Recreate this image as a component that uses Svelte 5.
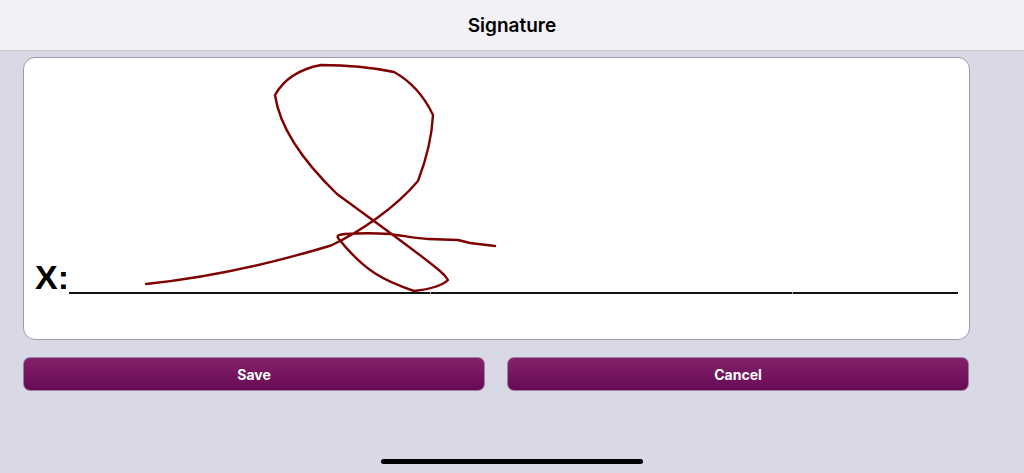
<script lang="ts">
  // signature stroke, in page pixels
  const stroke = `M146 284 C190 279.5 250 270 331 245.5 C360 232 395 208 418 181
    C426 160 432 135 433 115 C424 96 412 82 394 72 C370 67 345 65 321 65
    C300 69 284 79 275 95 C280 130 305 163 337 194 C360 211 415 250 440 271
    Q445 275 448 280 Q440 288 414 291 C385 281 365 272 338 238 Q336 234.5 345 234
    C360 233 375 233 390 234 C405 236 418 238.5 428 239 L458 240 L470 243 L495 246`;
</script>

<div class="screen">
  <header class="nav">Signature</header>

  <main class="content">
    <section class="pad">
      <div class="sign-row">
        <span class="x">X:</span>
        <span class="rule">
          <i></i>
          <i></i>
          <i class="last"></i>
        </span>
      </div>
      <svg class="ink" viewBox="24 58 945 281" aria-hidden="true">
        <path d={stroke} />
      </svg>
    </section>

    <div class="actions">
      <button>Save</button>
      <button>Cancel</button>
    </div>
  </main>

  <div class="home-bar"></div>
</div>

<style>
  :global(body) {
    margin: 0;
  }

  .screen {
    width: 1024px;
    height: 473px;
    display: flex;
    flex-direction: column;
    overflow: hidden;
    background: #d9d9e5;
    font-family: Inter, "Liberation Sans", sans-serif;
  }

  .nav {
    height: 50px;
    flex: none;
    display: flex;
    align-items: center;
    justify-content: center;
    background: #f1f1f6;
    border-bottom: 1px solid #cfcfda;
    color: #000;
    font-size: 19px;
    font-weight: 600;
  }

  .content {
    flex: 1;
    padding: 6px 54px 0 23px;
  }

  .pad {
    position: relative;
    box-sizing: border-box;
    height: 283px;
    padding: 0 11px 45px;
    display: flex;
    flex-direction: column;
    justify-content: flex-end;
    background: #fff;
    border: 1px solid #a596ae;
    border-radius: 12px;
  }

  .sign-row {
    display: flex;
    align-items: flex-end;
  }

  .x {
    font-family: "Liberation Sans", sans-serif;
    font-size: 34px;
    font-weight: 700;
    line-height: 34px;
    color: #000;
  }

  .rule {
    flex: 1;
    height: 2px;
    display: flex;
    gap: 1px;
    background: #999;
  }

  .rule i {
    width: 361px;
    background: #111;
  }

  .rule i.last {
    width: auto;
    flex: 1;
  }

  .ink {
    position: absolute;
    inset: 0;
    width: 100%;
    height: 100%;
  }

  .ink path {
    fill: none;
    stroke: #7f0000;
    stroke-width: 2.4;
    stroke-linejoin: round;
    stroke-linecap: round;
  }

  .actions {
    display: flex;
    gap: 22px;
    margin-top: 17px;
    padding-right: 1px;
  }

  button {
    flex: 1;
    height: 34px;
    padding: 0;
    border: 1px solid #a080a8;
    border-radius: 7px;
    background: linear-gradient(#812169, #690a55);
    color: #fff;
    font-family: inherit;
    font-size: 14px;
    font-weight: 700;
  }

  .home-bar {
    position: absolute;
    left: 381px;
    top: 459px;
    width: 262px;
    height: 5px;
    border-radius: 3px;
    background: #000;
  }
</style>
